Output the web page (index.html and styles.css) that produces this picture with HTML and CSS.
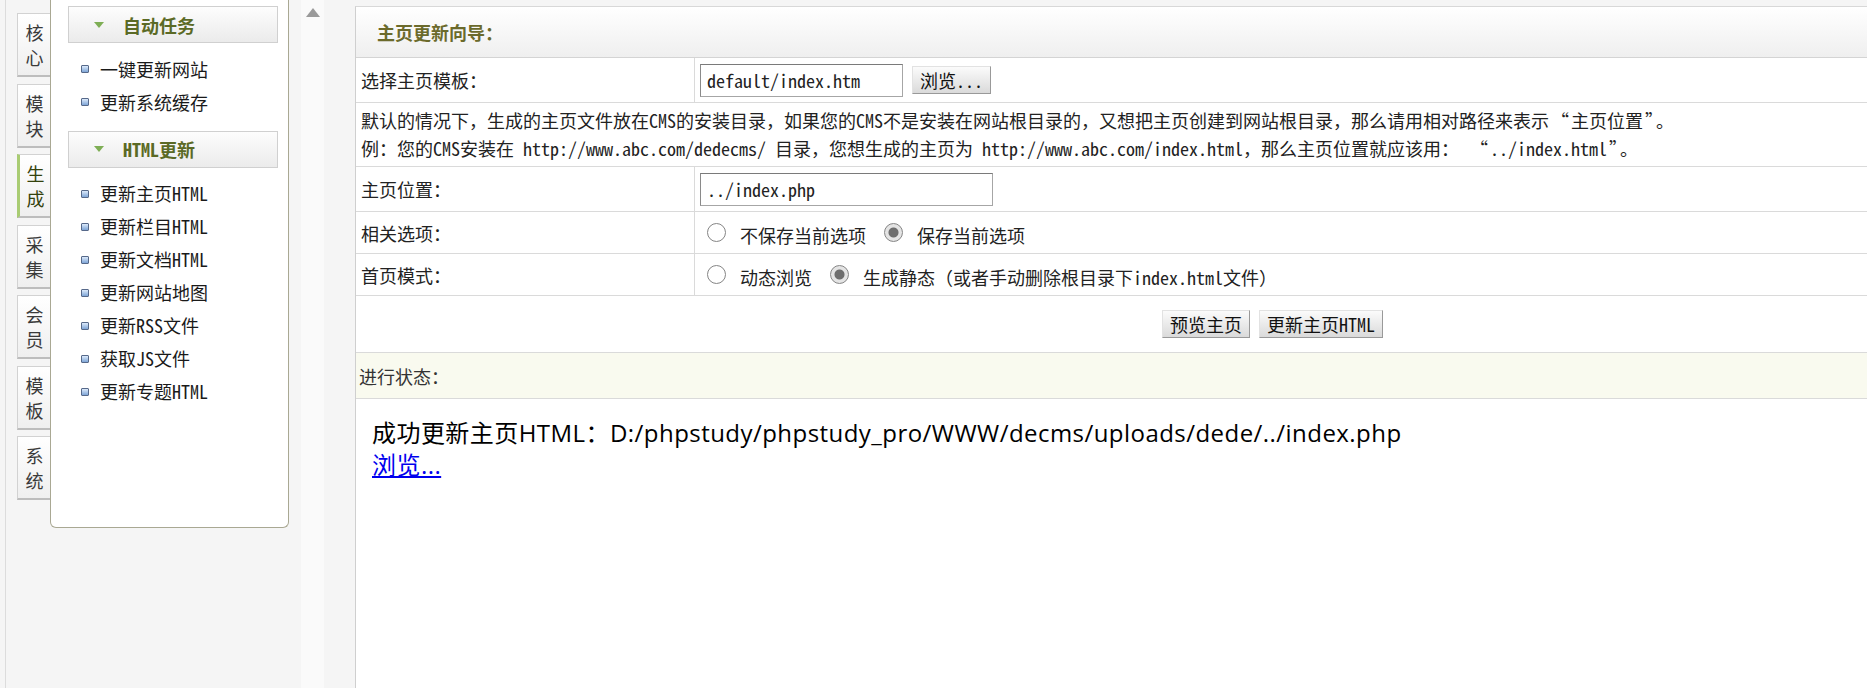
FILE: index.html
```html
<!DOCTYPE html>
<html lang="zh-CN">
<head>
<meta charset="utf-8">
<title>主页更新向导</title>
<link rel="stylesheet" href="styles.css">
</head>
<body>
<div class="frames">
  <aside class="left-frame">
    <div class="left-inner">
      <ul class="tabs">
        <li class="tab"><span>核心</span></li>
        <li class="tab"><span>模块</span></li>
        <li class="tab active"><span>生成</span></li>
        <li class="tab"><span>采集</span></li>
        <li class="tab"><span>会员</span></li>
        <li class="tab"><span>模板</span></li>
        <li class="tab"><span>系统</span></li>
      </ul>
      <div class="menu">
        <div class="sec-head"><span class="tri"></span>自动任务</div>
        <ul class="items">
          <li><span class="bullet"></span>一键更新网站</li>
          <li><span class="bullet"></span>更新系统缓存</li>
        </ul>
        <div class="sec-head"><span class="tri"></span>HTML更新</div>
        <ul class="items">
          <li><span class="bullet"></span>更新主页HTML</li>
          <li><span class="bullet"></span>更新栏目HTML</li>
          <li><span class="bullet"></span>更新文档HTML</li>
          <li><span class="bullet"></span>更新网站地图</li>
          <li><span class="bullet"></span>更新RSS文件</li>
          <li><span class="bullet"></span>获取JS文件</li>
          <li><span class="bullet"></span>更新专题HTML</li>
        </ul>
      </div>
    </div>
  </aside>
  <div class="toggle"><span class="up"></span></div>
  <main class="main-frame">
    <div class="sheet">
      <div class="sheet-head">主页更新向导：</div>
      <div class="row r45">
        <div class="label">选择主页模板：</div>
        <div class="value">
          <input class="text-input w203" type="text" value="default/index.htm">
          <button class="btn browse" type="button">浏览...</button>
        </div>
      </div>
      <div class="note">
        默认的情况下，生成的主页文件放在CMS的安装目录，如果您的CMS不是安装在网站根目录的，又想把主页创建到网站根目录，那么请用相对路径来表示<span class="q">“</span>主页位置<span class="q">”</span>。<br>
        例：您的CMS安装在 http://www.abc.com/dedecms/ 目录，您想生成的主页为 http://www.abc.com/index.html，那么主页位置就应该用： <span class="q">“</span>../index.html<span class="q">”</span>。
      </div>
      <div class="row r45">
        <div class="label">主页位置：</div>
        <div class="value">
          <input class="text-input w293" type="text" value="../index.php">
        </div>
      </div>
      <div class="row r42">
        <div class="label">相关选项：</div>
        <div class="value">
          <span class="radio"></span><span class="opt">不保存当前选项</span>
          <span class="radio on"></span><span class="opt">保存当前选项</span>
        </div>
      </div>
      <div class="row r42">
        <div class="label">首页模式：</div>
        <div class="value">
          <span class="radio"></span><span class="opt">动态浏览</span>
          <span class="radio on"></span><span class="opt">生成静态（或者手动删除根目录下index.html文件）</span>
        </div>
      </div>
      <div class="row actions">
        <button class="btn" type="button">预览主页</button>
        <button class="btn" type="button">更新主页HTML</button>
      </div>
      <div class="row status">进行状态：</div>
      <div class="result">
        成功更新主页HTML：D:/phpstudy/phpstudy_pro/WWW/decms/uploads/dede/../index.php<br>
        <a href="#">浏览...</a>
      </div>
    </div>
  </main>
</div>
</body>
</html>
```

FILE: styles.css
```css
* { box-sizing: border-box; }

html, body {
  margin: 0;
  padding: 0;
  height: 688px;
  overflow: hidden;
}

body {
  background: #f5f5f5;
  font-family: "Noto Sans Mono CJK SC", "Noto Sans CJK SC", sans-serif;
  font-size: 18px;
  color: #222;
}

.frames {
  display: flex;
  height: 688px;
}

/* ---------- left frame ---------- */
.left-frame {
  width: 301px;
  flex: none;
  padding-left: 5px;
}

.left-inner {
  display: flex;
  align-items: flex-start;
  height: 100%;
  border-left: 1px solid #dcdcdc;
  padding-left: 11px;
}

.tabs {
  list-style: none;
  margin: 13px 0 0;
  padding: 0;
  width: 34px;
  flex: none;
}

.tab {
  height: 64px;
  margin-bottom: 6.5px;
  border: 1px solid #d2d2d2;
  border-bottom: 2px solid #bdbdbd;
  border-right: none;
  background: linear-gradient(#ffffff, #efefef);
  color: #3a3a3a;
  padding-top: 6px;
}

.tab span {
  display: block;
  width: 18px;
  margin: 0 auto;
  line-height: 25px;
}

.tab.active {
  border-left: 3px solid #a9cc73;
  color: #34420c;
}

.menu {
  width: 239px;
  height: 528px;
  flex: none;
  margin-left: -1px;
  position: relative;
  background: #fff;
  border: 1px solid #a9a893;
  border-top: none;
  border-radius: 0 0 6px 6px;
  padding: 6px 10px 0 17px;
}

.sec-head {
  height: 37px;
  border: 1px solid #d0d0d0;
  background: linear-gradient(#fdfdfd, #ebebeb);
  display: flex;
  align-items: center;
  padding-left: 25px;
  font-weight: bold;
  color: #5b6a25;
}

.tri {
  width: 0;
  height: 0;
  border-left: 5px solid transparent;
  border-right: 5px solid transparent;
  border-top: 6px solid #7eae55;
  margin-right: 19px;
}

.items {
  list-style: none;
  margin: 0;
  padding: 9.5px 0 12px 13px;
}

.items li {
  height: 33px;
  line-height: 33px;
  display: flex;
  align-items: center;
  color: #1a1a1a;
}

.bullet {
  width: 8px;
  height: 8px;
  border: 1px solid #56698a;
  border-radius: 1px;
  background: linear-gradient(#dceafb, #7ea5d6);
  margin-right: 11px;
  flex: none;
}

/* ---------- toggle strip ---------- */
.toggle {
  width: 23px;
  flex: none;
  background: #fafafa;
}

.up {
  display: block;
  width: 0;
  height: 0;
  margin: 8px 0 0 5px;
  border-left: 7px solid transparent;
  border-right: 7px solid transparent;
  border-bottom: 9px solid #9a9a9a;
}

/* ---------- main frame ---------- */
.main-frame {
  flex: 1;
  min-width: 0;
  overflow: hidden;
  padding: 6px 0 0 31px;
}

.sheet {
  width: 1834px;
  height: 682px;
  background: #fff;
  border-left: 1px solid #cfcfcf;
  border-top: 1px solid #d8d8d8;
}

.sheet-head {
  height: 51px;
  border-bottom: 1px solid #d4d4d4;
  background: linear-gradient(#ffffff, #efefef);
  display: flex;
  align-items: center;
  padding-left: 21px;
  font-weight: bold;
  color: #6b6a2b;
}

.row {
  display: flex;
  border-bottom: 1px solid #dadada;
}

.r45 { height: 45px; }
.r42 { height: 42px; }

.label {
  width: 339px;
  flex: none;
  border-right: 1px solid #dadada;
  padding-left: 5px;
  display: flex;
  align-items: center;
  color: #222;
}

.value {
  flex: 1;
  display: flex;
  align-items: center;
  padding-left: 5px;
}

.text-input {
  height: 33px;
  font: inherit;
  color: #222;
  padding: 0 0 0 6px;
  margin: 0;
  border: 1px solid #a6a6a6;
  border-top-color: #7a7a7a;
  border-left-color: #8a8a8a;
  background: #fff;
  outline: none;
}

.w203 { width: 203px; }
.w293 { width: 293px; }

.btn {
  height: 28px;
  font: inherit;
  line-height: 26px;
  color: #111;
  padding: 0 7px;
  margin: 0;
  border: 1px solid;
  border-color: #e2e2e2 #999 #999 #e2e2e2;
  background: linear-gradient(#fbfbfb, #dadada);
  border-radius: 0;
}

.browse { margin-left: 9px; }

.note {
  display: block;
  height: 64px;
  padding: 3px 5px 0;
  line-height: 28px;
  white-space: nowrap;
  border-bottom: 1px solid #dadada;
}

.q {
  padding: 0 2px;
}

.radio {
  width: 19px;
  height: 19px;
  flex: none;
  border-radius: 50%;
  border: 1px solid #858585;
  background: #fff;
  margin: 0 14px 0 7px;
}

.radio.on {
  background: radial-gradient(circle, #6e6e6e 0 4.5px, #e4e4e4 5.5px);
}

.opt {
  margin-right: 11px;
  position: relative;
  top: 2px;
}

.actions {
  height: 57px;
  align-items: center;
  justify-content: center;
  gap: 9px;
}

.status {
  height: 46px;
  align-items: center;
  background: #f9faef;
  padding-left: 3px;
  color: #333;
}

.result {
  padding: 18px 16px;
  font-family: "Open Sans", "Noto Sans CJK SC", sans-serif;
  font-size: 24px;
  line-height: 32px;
  letter-spacing: 0.45px;
  color: #000;
}

.result a {
  color: #0000ee;
  text-decoration: underline;
}
```
